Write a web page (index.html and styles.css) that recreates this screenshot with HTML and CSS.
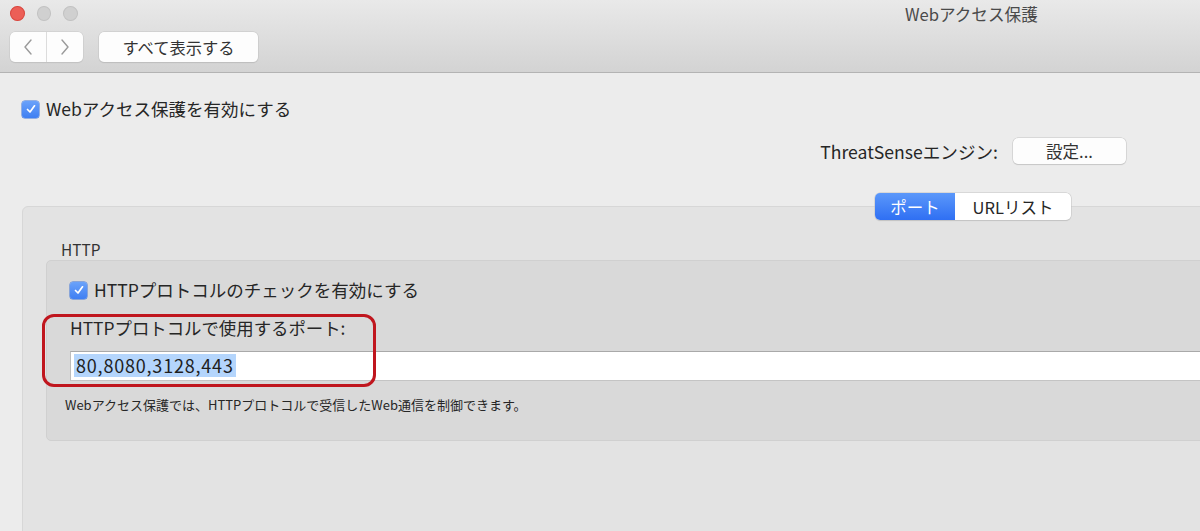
FILE: index.html
```html
<!DOCTYPE html>
<html lang="ja">
<head>
<meta charset="utf-8">
<title>Webアクセス保護</title>
<link rel="stylesheet" href="styles.css">
</head>
<body>
<div class="window">
  <header class="titlebar">
    <div class="title-row">
      <div class="lights">
        <span class="light red"></span>
        <span class="light grey"></span>
        <span class="light grey"></span>
      </div>
      <div class="title">Webアクセス保護</div>
    </div>
    <div class="toolbar">
      <div class="nav">
        <span class="nav-btn">
          <svg width="12" height="18" viewBox="0 0 12 18"><path d="M9 2 L3 9 L9 16" fill="none" stroke="#9a9a9a" stroke-width="1.4" stroke-linecap="round" stroke-linejoin="round"/></svg>
        </span>
        <span class="nav-btn">
          <svg width="12" height="18" viewBox="0 0 12 18"><path d="M3 2 L9 9 L3 16" fill="none" stroke="#9a9a9a" stroke-width="1.4" stroke-linecap="round" stroke-linejoin="round"/></svg>
        </span>
      </div>
      <div class="btn show-all">すべて表示する</div>
    </div>
  </header>

  <main class="content">
    <label class="check-row main-check">
      <span class="checkbox"><svg width="12" height="12" viewBox="0 0 12 12"><path d="M2.5 6.5 L5 9 L9.5 2.8" fill="none" stroke="#fff" stroke-width="1.7" stroke-linecap="round" stroke-linejoin="round"/></svg></span>
      <span class="check-label">Webアクセス保護を有効にする</span>
    </label>

    <div class="engine-row">
      <span class="engine-label">ThreatSenseエンジン:</span>
      <div class="btn settings">設定...</div>
    </div>

    <div class="tabs-row">
      <div class="tabs">
        <span class="tab active">ポート</span>
        <span class="tab">URLリスト</span>
      </div>
    </div>

    <section class="group">
      <div class="group-title">HTTP</div>
      <div class="inner">
        <label class="check-row">
          <span class="checkbox"><svg width="12" height="12" viewBox="0 0 12 12"><path d="M2.5 6.5 L5 9 L9.5 2.8" fill="none" stroke="#fff" stroke-width="1.7" stroke-linecap="round" stroke-linejoin="round"/></svg></span>
          <span class="check-label">HTTPプロトコルのチェックを有効にする</span>
        </label>
        <div class="port-label">HTTPプロトコルで使用するポート:</div>
        <div class="input"><span class="selected">80,8080,3128,443</span></div>
        <p class="desc">Webアクセス保護では、HTTPプロトコルで受信したWeb通信を制御できます。</p>
        <div class="annotation"></div>
      </div>
    </section>
  </main>
</div>
</body>
</html>
```

FILE: styles.css
```css
* { box-sizing: border-box; }

html, body {
  margin: 0;
  padding: 0;
}

body {
  width: 1200px;
  height: 531px;
  overflow: hidden;
  background: #ececec;
  font-family: "Noto Sans CJK JP", "Liberation Sans", sans-serif;
  color: #262626;
}

.window {
  width: 1200px;
  height: 531px;
  overflow: hidden;
  display: flex;
  flex-direction: column;
}

.titlebar {
  height: 73px;
  background: linear-gradient(#e9e9e9, #d3d3d3);
  border-bottom: 1px solid #b3b3b3;
  flex: none;
}

.title-row {
  display: flex;
  align-items: center;
  height: 27px;
  padding-left: 10px;
}

.lights {
  display: flex;
  gap: 12px;
  width: 68px;
}

.light {
  width: 15px;
  height: 15px;
  border-radius: 50%;
}

.light.red {
  background: #ec5f57;
  border: 1px solid #d9463e;
}

.light.grey {
  background: #d0d0d0;
  border: 1px solid #c2c2c2;
}

.title {
  margin-left: 827px;
  font-size: 16.6px;
  color: #4a4a4a;
  line-height: 20px;
}

.toolbar {
  display: flex;
  align-items: center;
  padding-left: 10px;
  margin-top: 5px;
  gap: 16px;
}

.nav {
  display: flex;
  width: 73px;
  height: 30px;
  background: #fdfdfd;
  border-radius: 5px;
  box-shadow: 0 0 0 0.5px #c8c8c8, 0 1px 1px rgba(0,0,0,0.12);
}

.nav-btn {
  flex: 1;
  display: flex;
  align-items: center;
  justify-content: center;
}

.nav-btn + .nav-btn {
  border-left: 1px solid #dcdcdc;
}

.btn {
  display: flex;
  align-items: center;
  justify-content: center;
  background: #fdfdfd;
  border-radius: 5px;
  box-shadow: 0 0 0 0.5px #c4c4c4, 0 1px 1px rgba(0,0,0,0.14);
  color: #333;
}

.show-all {
  width: 159px;
  height: 30px;
  font-size: 16.3px;
}

.content {
  flex: 1;
  padding-top: 25px;
  position: relative;
}

.check-row {
  display: flex;
  align-items: center;
  gap: 7px;
}

.main-check {
  margin-left: 22px;
  height: 22px;
}

.checkbox {
  width: 17px;
  height: 17px;
  border-radius: 3px;
  background: linear-gradient(#6aa2fa, #3f7ff2);
  box-shadow: 0 0 0 0.5px #3a72d8;
  display: flex;
  align-items: center;
  justify-content: center;
  flex: none;
}

.check-label {
  font-size: 17.5px;
  line-height: 22px;
  color: #262626;
}

.engine-row {
  display: flex;
  justify-content: flex-end;
  align-items: center;
  gap: 15px;
  padding-right: 74px;
  margin-top: 18px;
}

.engine-label {
  font-size: 17.6px;
  color: #262626;
}

.settings {
  width: 113px;
  height: 26px;
  font-size: 16.5px;
}

.tabs-row {
  display: flex;
  justify-content: flex-end;
  padding-right: 129px;
  margin-top: 29px;
  position: relative;
  z-index: 2;
}

.tabs {
  display: flex;
  height: 27px;
  border-radius: 5px;
  background: #fff;
  box-shadow: 0 0 0 0.5px #c4c4c4, 0 1px 1px rgba(0,0,0,0.14);
  overflow: hidden;
}

.tab {
  display: flex;
  align-items: center;
  justify-content: center;
  font-size: 16.5px;
  color: #262626;
  width: 116px;
}

.tab.active {
  width: 80px;
  background: linear-gradient(#5b98fa, #2f6ff3);
  color: #fff;
}

.group {
  margin-left: 22px;
  margin-top: -14px;
  width: 1200px;
  height: 340px;
  flex: none;
  background: #e3e3e3;
  border: 1px solid #d7d7d7;
  border-radius: 6px;
  padding-top: 32px;
  padding-left: 23px;
}

.group-title {
  font-size: 15.4px;
  color: #333;
  margin-left: 15px;
  line-height: 20px;
}

.inner {
  position: relative;
  margin-top: 1px;
  height: 181px;
  background: #d9d9d9;
  border: 1px solid #d0d0d0;
  border-radius: 5px;
  padding-left: 23px;
  padding-top: 18px;
}

.inner .check-row {
  height: 22px;
}

.port-label {
  margin-top: 16px;
  font-size: 17.4px;
  line-height: 22px;
  color: #262626;
}

.input {
  margin-top: 12px;
  height: 30px;
  background: #fff;
  border-top: 1px solid #a9a9a9;
  border-left: 1px solid #bdbdbd;
  border-bottom: 1px solid #c4c4c4;
  padding: 2px 0 0 3px;
}

.selected {
  display: inline-block;
  background: #b4d5fc;
  font-size: 18px;
  line-height: 23px;
  padding: 0 2px;
  letter-spacing: 0.8px;
  color: #1e1e1e;
}

.desc {
  margin: 15px 0 0 -5px;
  font-size: 13px;
  line-height: 18px;
  color: #262626;
}

.annotation {
  position: absolute;
  left: -5px;
  top: 53px;
  width: 334px;
  height: 73px;
  border: 3px solid #c0161e;
  border-radius: 12px;
  pointer-events: none;
}
```
